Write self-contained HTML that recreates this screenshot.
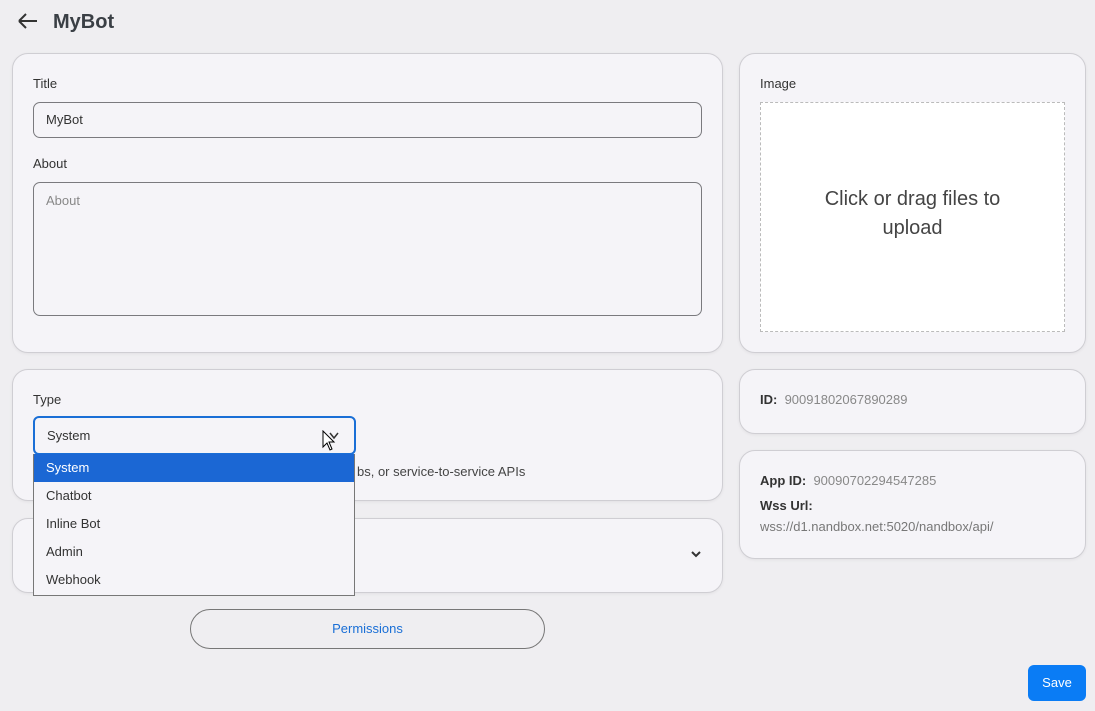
<!DOCTYPE html><html><head><style>
body{margin:0;width:1095px;height:711px;background:#efeef1;font-family:"Liberation Sans",sans-serif;color:#333;position:relative;overflow:hidden}
.a{position:absolute}
.card{position:absolute;background:#f5f4f8;border:1px solid #cfced3;border-radius:16px;box-sizing:border-box;box-shadow:0 1px 3px rgba(0,0,0,.06)}
.lbl{font-size:13px;color:#333;font-weight:500}
.inp{position:absolute;border:1px solid #7a7a7e;border-radius:7px;box-sizing:border-box;background:#f5f4f8;font-size:13px;color:#333}
.opt{height:28px;line-height:28px;padding-left:12px;font-size:13px;color:#333}
</style></head><body>
<svg class="a" style="left:17px;top:12px" width="22" height="18" viewBox="0 0 22 18"><path d="M2 9H20M2 9L9 2M2 9L9 16" stroke="#333" stroke-width="2" fill="none"/></svg>
<div class="a" style="left:53px;top:11px;font-size:20px;font-weight:bold;color:#3a3f45">MyBot</div>

<div class="card" style="left:12px;top:53px;width:711px;height:300px"></div>
<div class="a lbl" style="left:33px;top:76px">Title</div>
<div class="inp" style="left:33px;top:102px;width:669px;height:36px;line-height:34px;padding-left:12px">MyBot</div>
<div class="a lbl" style="left:33px;top:156px">About</div>
<div class="inp" style="left:33px;top:182px;width:669px;height:134px;padding:10px 12px;color:#888">About</div>

<div class="card" style="left:739px;top:53px;width:347px;height:300px"></div>
<div class="a lbl" style="left:760px;top:76px">Image</div>
<div class="a" style="left:760px;top:102px;width:305px;height:230px;border:1px dashed #bbb;box-sizing:border-box;background:#fff;text-align:center;font-size:20px;color:#444;line-height:29px;padding-top:82px">Click or drag files to<br>upload</div>

<div class="card" style="left:12px;top:369px;width:711px;height:132px"></div>
<div class="a lbl" style="left:33px;top:392px">Type</div>
<div class="a" style="left:357px;top:464px;font-size:13px;color:#444">bs, or service-to-service APIs</div>

<div class="card" style="left:12px;top:518px;width:711px;height:75px"></div>
<svg class="a" style="left:690px;top:550px" width="12" height="9" viewBox="0 0 12 9"><path d="M2 2L6 6L10 2" stroke="#333" stroke-width="2" fill="none"/></svg>

<div class="inp" style="left:33px;top:416px;width:323px;height:39px;border:2px solid #1a6fd6;border-radius:6px;line-height:35px;padding-left:12px">System</div>
<svg class="a" style="left:322px;top:430px" width="20" height="22" viewBox="0 0 20 22"><path d="M8 3L12 8L16 3" stroke="#333" stroke-width="1.5" fill="none"/><path d="M1 1V17L5 13L8 20L10 19L7 12H12Z" fill="#fff" stroke="#000" stroke-width="1"/></svg>
<div class="a" style="left:33px;top:454px;width:322px;background:#f5f4f8;border:1px solid #777;border-top:none;box-sizing:border-box;height:142px">
<div class="opt" style="background:#1b67d4;color:#fff">System</div><div class="opt">Chatbot</div><div class="opt">Inline Bot</div><div class="opt">Admin</div><div class="opt">Webhook</div></div>

<div class="card" style="left:739px;top:369px;width:347px;height:65px"></div>
<div class="a" style="left:760px;top:392px;font-size:13px;color:#888"><b style="color:#333">ID:</b>&nbsp; 90091802067890289</div>
<div class="card" style="left:739px;top:450px;width:347px;height:109px"></div>
<div class="a" style="left:760px;top:473px;font-size:13px;color:#888"><b style="color:#333">App ID:</b>&nbsp; 90090702294547285</div>
<div class="a" style="left:760px;top:498px;font-size:13px;color:#333;font-weight:bold">Wss Url:</div>
<div class="a" style="left:760px;top:519px;font-size:13px;color:#777">wss://d1.nandbox.net:5020/nandbox/api/</div>

<div class="a" style="left:190px;top:609px;width:355px;height:40px;border:1px solid #777;border-radius:20px;box-sizing:border-box;text-align:center;line-height:38px;font-size:13px;color:#1a6fd6">Permissions</div>
<div class="a" style="left:1028px;top:665px;width:58px;height:36px;background:#0a7cf5;border-radius:6px;color:#fff;font-size:13px;text-align:center;line-height:36px">Save</div>
</body></html>
